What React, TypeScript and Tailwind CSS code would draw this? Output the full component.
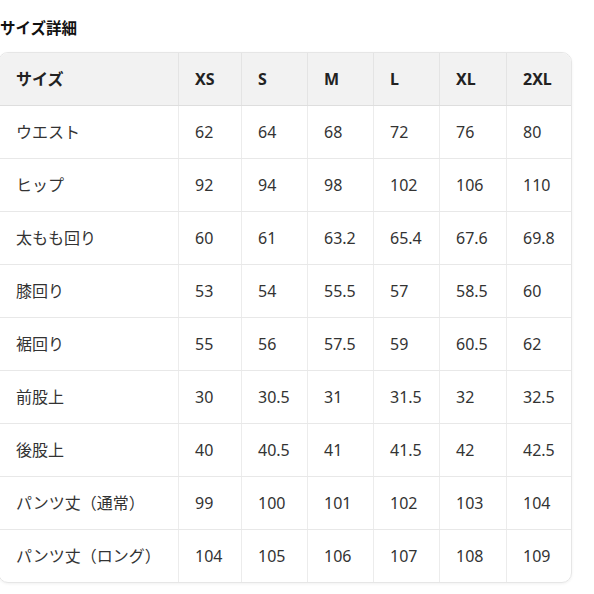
import React from "react";

const headers = ["サイズ", "XS", "S", "M", "L", "XL", "2XL"];
const rows: string[][] = [
  ["ウエスト", "62", "64", "68", "72", "76", "80"],
  ["ヒップ", "92", "94", "98", "102", "106", "110"],
  ["太もも回り", "60", "61", "63.2", "65.4", "67.6", "69.8"],
  ["膝回り", "53", "54", "55.5", "57", "58.5", "60"],
  ["裾回り", "55", "56", "57.5", "59", "60.5", "62"],
  ["前股上", "30", "30.5", "31", "31.5", "32", "32.5"],
  ["後股上", "40", "40.5", "41", "41.5", "42", "42.5"],
  ["パンツ丈（通常）", "99", "100", "101", "102", "103", "104"],
  ["パンツ丈（ロング）", "104", "105", "106", "107", "108", "109"],
];

export default function App() {
  return (
    <div
      className="w-[594px] h-[594px] bg-white overflow-hidden text-[#333]"
      style={{ fontFamily: '"Noto Sans", "Noto Sans CJK JP", sans-serif' }}
    >
      <div className="pt-[17px] h-[52px]">
        <h2 className="text-[15.5px] font-bold leading-[22px] text-[#111]">サイズ詳細</h2>
      </div>
      <div className="ml-[-2px] w-[574px] rounded-[10px] border border-[#e6e6e6] overflow-hidden shadow-[0_1px_3px_rgba(0,0,0,0.06)]">
        <div className="grid grid-cols-[180px_63px_66px_66px_66px_67px_65px] bg-[#f2f2f2] border-b border-[#dedede]">
          {headers.map((h, i) => (
            <div
              key={i}
              className={`h-[52px] flex items-center text-[16px] font-bold text-[#222] ${i === 0 ? "pl-[17px]" : "pl-[16px]"} ${i < 6 ? "border-r border-[#e4e4e4]" : ""}`}
            >
              {h}
            </div>
          ))}
        </div>
        {rows.map((r, ri) => (
          <div
            key={ri}
            className={`grid grid-cols-[180px_63px_66px_66px_66px_67px_65px] ${ri < rows.length - 1 ? "border-b border-[#e8e8e8]" : ""}`}
          >
            {r.map((c, ci) => (
              <div
                key={ci}
                className={`h-[52px] flex items-center text-[16px] text-[#333] ${ci === 0 ? "pl-[17px]" : "pl-[16px]"} ${ci < 6 ? "border-r border-[#ececec]" : ""}`}
              >
                {c}
              </div>
            ))}
          </div>
        ))}
      </div>
    </div>
  );
}
